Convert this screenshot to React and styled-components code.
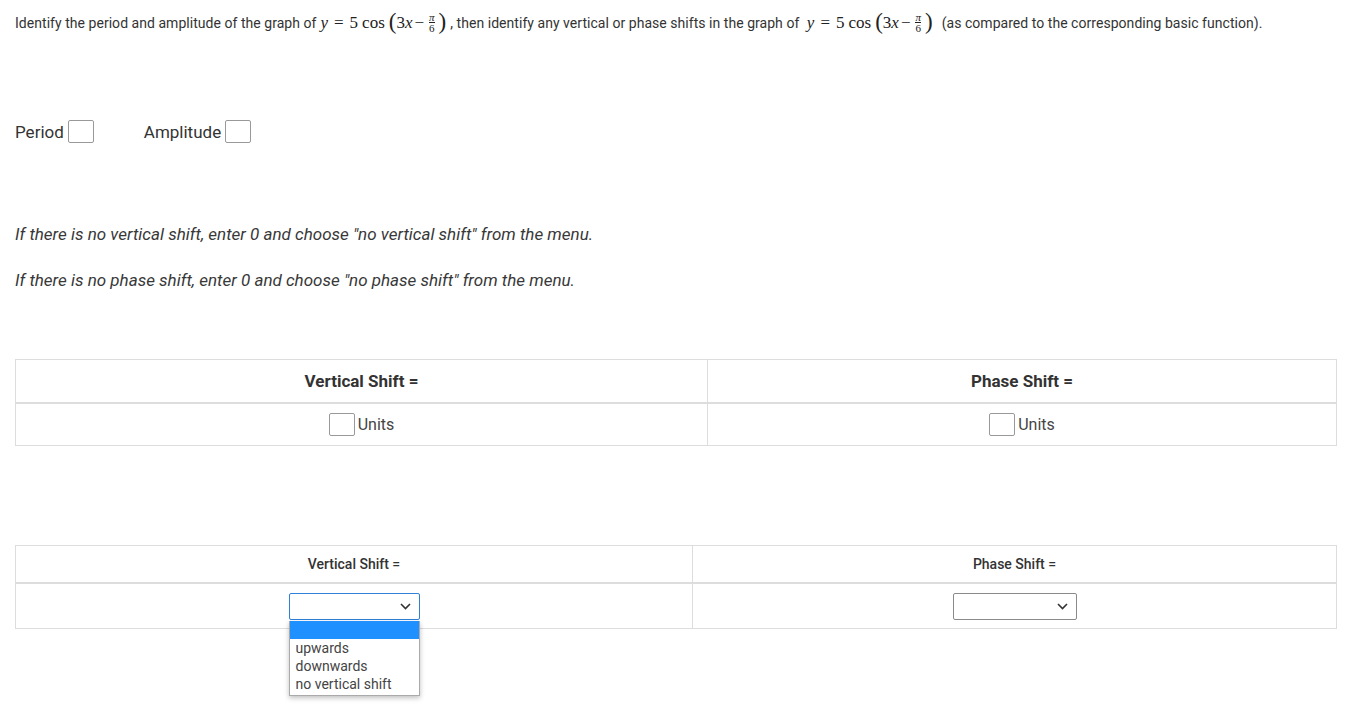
import React from "react";
import styled, { createGlobalStyle } from "styled-components";

const GlobalStyle = createGlobalStyle`
  body {
    margin: 0;
    background: #fff;
    font-family: Roboto, "Liberation Sans", sans-serif;
    color: #333;
  }
`;

const Page = styled.div`
  box-sizing: border-box;
  min-height: 714px;
  padding: 9px 32px 0 15px;
`;

const Question = styled.div`
  font-size: 14px;
  line-height: 28px;
  letter-spacing: 0.04px;
  color: #333;
  display: flex;
  align-items: center;
  white-space: nowrap;
`;

const Math = styled.span`
  font-family: "Liberation Serif", "DejaVu Serif", serif;
  font-size: 17px;
  letter-spacing: 0;
  display: inline-flex;
  align-items: center;
  margin: 0 ${(p) => p.gap || 6}px 0 4px;
  color: #222;
`;

const Var = styled.i`
  font-style: italic;
`;

const Op = styled.span`
  margin: 0 ${(p) => p.space || 5}px;
`;

const Paren = styled.span`
  font-size: 23px;
  line-height: 1;
  margin-top: -3px;
`;

const Frac = styled.span`
  display: inline-flex;
  flex-direction: column;
  align-items: center;
  font-size: 11px;
  line-height: 9px;
  margin: 0 3px 0 2px;
  padding: 0 1px;
  span + span {
    border-top: 1px solid #222;
    padding-top: 1px;
  }
`;

const FieldRow = styled.div`
  display: flex;
  align-items: center;
  gap: 50px;
  margin-top: 83px;
  font-size: 17px;
`;

const Field = styled.label`
  display: flex;
  align-items: center;
  gap: 4px;
  color: #333;
`;

const Box = styled.span`
  display: inline-block;
  width: 24px;
  height: 21px;
  border: 1px solid #999;
  border-radius: 2px;
  background: #fff;
`;

const Note = styled.p`
  font-style: italic;
  font-size: 17px;
  line-height: 22px;
  margin: ${(p) => p.top}px 0 0;
  color: #383838;
`;

const Grid = styled.div`
  display: grid;
  grid-template-columns: ${(p) => p.first}px 1fr;
  margin-top: ${(p) => p.top}px;
  border-top: 1px solid #ddd;
  border-left: 1px solid #ddd;
`;

const HeadCell = styled.div`
  height: ${(p) => p.h}px;
  display: flex;
  align-items: center;
  justify-content: center;
  border-right: 1px solid #ddd;
  border-bottom: 2px solid #ddd;
  font-size: ${(p) => p.size}px;
  font-weight: ${(p) => p.weight};
  color: #333;
`;

const Cell = styled.div`
  height: ${(p) => p.h}px;
  display: flex;
  align-items: center;
  justify-content: center;
  border-right: 1px solid #ddd;
  border-bottom: 1px solid #ddd;
  font-size: 16px;
  color: #444;
  gap: 3px;
`;

const SelectWrap = styled.div`
  position: relative;
`;

const Select = styled.div`
  box-sizing: border-box;
  width: ${(p) => p.w}px;
  height: 27px;
  border: 1px solid ${(p) => (p.focused ? "#2f80d8" : "#8a8a8a")};
  border-radius: 2px;
  background: #fff;
  display: flex;
  align-items: center;
  justify-content: flex-end;
  padding-right: 8px;
`;

const Menu = styled.ul`
  position: absolute;
  top: 28px;
  left: 0;
  box-sizing: border-box;
  width: 100%;
  margin: 0;
  padding: 0 0 2px;
  list-style: none;
  background: #fff;
  border: 1px solid #aaa;
  border-top: none;
  box-shadow: 0 2px 5px rgba(0, 0, 0, 0.25);
  z-index: 2;
`;

const Option = styled.li`
  height: 18px;
  line-height: 18px;
  padding-left: 6px;
  font-size: 14px;
  color: #444;
  background: ${(p) => (p.active ? "#1e90ff" : "#fff")};
`;

const Chevron = () => (
  <svg width="11" height="7" viewBox="0 0 11 7">
    <path d="M1 1l4.5 4.5L10 1" fill="none" stroke="#333" strokeWidth="1.6" />
  </svg>
);

const Formula = ({ gap }) => (
  <Math gap={gap}>
    <Var>y</Var>
    <Op space={6}>=</Op>
    <span>5</span>
    <Op space={4}>cos</Op>
    <Paren>(</Paren>
    <span>3</span>
    <Var>x</Var>
    <Op space={2}>−</Op>
    <Frac>
      <span>
        <Var>π</Var>
      </span>
      <span>6</span>
    </Frac>
    <Paren>)</Paren>
  </Math>
);

const App = () => {
  return (
    <Page>
      <GlobalStyle />
      <Question>
        Identify the period and amplitude of the graph of
        <Formula gap={4} />, then identify any vertical or phase shifts in the graph of&nbsp;
        <Formula gap={9} />
        (as compared to the corresponding basic function).
      </Question>

      <FieldRow>
        <Field>
          Period <Box />
        </Field>
        <Field>
          Amplitude <Box />
        </Field>
      </FieldRow>

      <Note top={80}>If there is no vertical shift, enter 0 and choose "no vertical shift" from the menu.</Note>
      <Note top={24}>If there is no phase shift, enter 0 and choose "no phase shift" from the menu.</Note>

      <Grid first={692} top={68}>
        <HeadCell h={42} size={17} weight={700}>Vertical Shift =</HeadCell>
        <HeadCell h={42} size={17} weight={700}>Phase Shift =</HeadCell>
        <Cell h={41}>
          <Box /> Units
        </Cell>
        <Cell h={41}>
          <Box /> Units
        </Cell>
      </Grid>

      <Grid first={677} top={99}>
        <HeadCell h={36} size={14} weight={500}>Vertical Shift =</HeadCell>
        <HeadCell h={36} size={14} weight={500}>Phase Shift =</HeadCell>
        <Cell h={44}>
          <SelectWrap>
            <Select w={131} focused>
              <Chevron />
            </Select>
            <Menu>
              <Option active>&nbsp;</Option>
              <Option>upwards</Option>
              <Option>downwards</Option>
              <Option>no vertical shift</Option>
            </Menu>
          </SelectWrap>
        </Cell>
        <Cell h={44}>
          <Select w={124}>
            <Chevron />
          </Select>
        </Cell>
      </Grid>
    </Page>
  );
};

export default App;
